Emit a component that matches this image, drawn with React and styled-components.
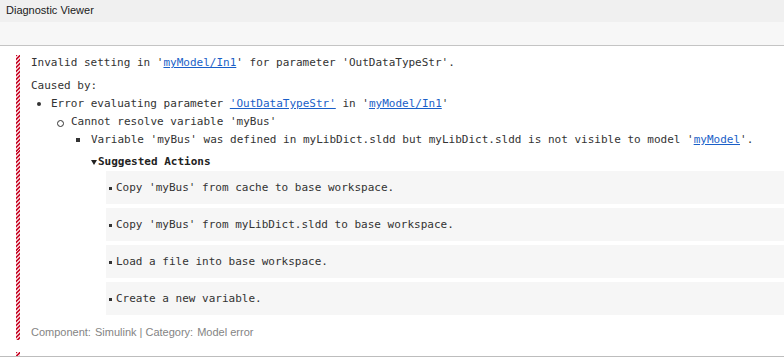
import styled, { createGlobalStyle } from 'styled-components';

const Global = createGlobalStyle`
  html, body {
    margin: 0;
    padding: 0;
    background: #ffffff;
    overflow: hidden;
  }
  * {
    box-sizing: border-box;
  }
`;

const Window = styled.div`
  width: 784px;
  height: 357px;
  display: flex;
  flex-direction: column;
  background: #ffffff;
`;

const TitleBar = styled.div`
  height: 22px;
  flex: none;
  display: flex;
  align-items: center;
  padding: 0 0 3px 6px;
  background: #f0f0f0;
  font-family: 'Liberation Sans', Arial, sans-serif;
  font-size: 11px;
  color: #1a1a1a;
`;

const Toolbar = styled.div`
  height: 24px;
  flex: none;
  background: #f7f7f7;
  border-bottom: 1px solid #c4c4c4;
`;

const Content = styled.div`
  flex: 1;
  overflow: hidden;
  border-bottom: 1px solid #bdbdbd;
  padding-top: 8px;
`;

const Message = styled.div`
  display: flex;
  margin-bottom: 11px;
  min-height: ${(p) => (p.$stub ? '20px' : 'auto')};
`;

const Stripe = styled.div`
  flex: none;
  width: 4px;
  margin: 1px 0 0 16px;
  background: repeating-linear-gradient(
    135deg,
    #c8102e 0 1.4px,
    #f6c9cf 1.4px 2.8px
  );
`;

const Body = styled.div`
  flex: 1;
  padding-left: 11px;
  font-family: 'DejaVu Sans Mono', Consolas, monospace;
  font-size: 11px;
  line-height: 18px;
  color: #333333;
  white-space: nowrap;
`;

const Line = styled.div`
  margin-top: ${(p) => p.$gap || 0}px;
`;

const Link = styled.a`
  color: #1a5fc8;
  text-decoration: underline;
  cursor: pointer;
`;

const List = styled.ul`
  list-style: none;
  margin: 0;
  padding-left: 20px;
`;

const Item = styled.li`
  position: relative;
  &::before {
    content: '';
    position: absolute;
    top: 7px;
    left: ${(p) => (p.$kind === 'square' ? '-15px' : '-14px')};
    width: ${(p) => (p.$kind === 'circle' ? '5px' : '4px')};
    height: ${(p) => (p.$kind === 'circle' ? '5px' : '4px')};
    border-radius: ${(p) => (p.$kind === 'square' ? '0' : '50%')};
    background: ${(p) => (p.$kind === 'circle' ? 'transparent' : '#333333')};
    border: ${(p) => (p.$kind === 'circle' ? '1px solid #333333' : 'none')};
  }
`;

const ActionsHeader = styled.div`
  margin-top: 4px;
  display: flex;
  align-items: center;
  font-weight: bold;
  color: #222222;
`;

const Caret = styled.span`
  width: 0;
  height: 0;
  margin: 1px 1px 0 0;
  border-left: 3px solid transparent;
  border-right: 3px solid transparent;
  border-top: 5px solid #222222;
`;

const Actions = styled.div`
  margin: 0 0 0 15px;
  display: flex;
  flex-direction: column;
  gap: 4px;
`;

const Action = styled.div`
  height: 33px;
  display: flex;
  align-items: center;
  padding-left: 10px;
  background: #f6f6f6;
  position: relative;
  &::before {
    content: '';
    position: absolute;
    left: 3px;
    top: 16px;
    width: 3px;
    height: 3px;
    background: #333333;
  }
`;

const Footer = styled.div`
  margin-top: 9px;
  font-family: 'Liberation Sans', Arial, sans-serif;
  font-size: 11px;
  line-height: 16px;
  color: #848484;
`;

const Label = styled.span`
  margin-right: 4px;
`;

const actions = [
  "Copy 'myBus' from cache to base workspace.",
  "Copy 'myBus' from myLibDict.sldd to base workspace.",
  'Load a file into base workspace.',
  'Create a new variable.',
];

export default function App() {
  return (
    <>
      <Global />
      <Window>
        <TitleBar>Diagnostic Viewer</TitleBar>
        <Toolbar />
        <Content>
          <Message>
            <Stripe />
            <Body>
              <Line>
                Invalid setting in '<Link>myModel/In1</Link>' for parameter 'OutDataTypeStr'.
              </Line>
              <Line $gap={5}>Caused by:</Line>
              <List>
                <Item $kind="disc">
                  Error evaluating parameter <Link>'OutDataTypeStr'</Link> in '
                  <Link>myModel/In1</Link>'
                  <List>
                    <Item $kind="circle">
                      Cannot resolve variable 'myBus'
                      <List>
                        <Item $kind="square">
                          Variable 'myBus' was defined in myLibDict.sldd but myLibDict.sldd is not
                          visible to model '<Link>myModel</Link>'.
                          <ActionsHeader>
                            <Caret />
                            Suggested Actions
                          </ActionsHeader>
                          <Actions>
                            {actions.map((a) => (
                              <Action key={a}>{a}</Action>
                            ))}
                          </Actions>
                        </Item>
                      </List>
                    </Item>
                  </List>
                </Item>
              </List>
              <Footer>
                <Label>Component:</Label>Simulink | <Label>Category:</Label>Model error
              </Footer>
            </Body>
          </Message>
          <Message $stub>
            <Stripe />
          </Message>
        </Content>
      </Window>
    </>
  );
}
